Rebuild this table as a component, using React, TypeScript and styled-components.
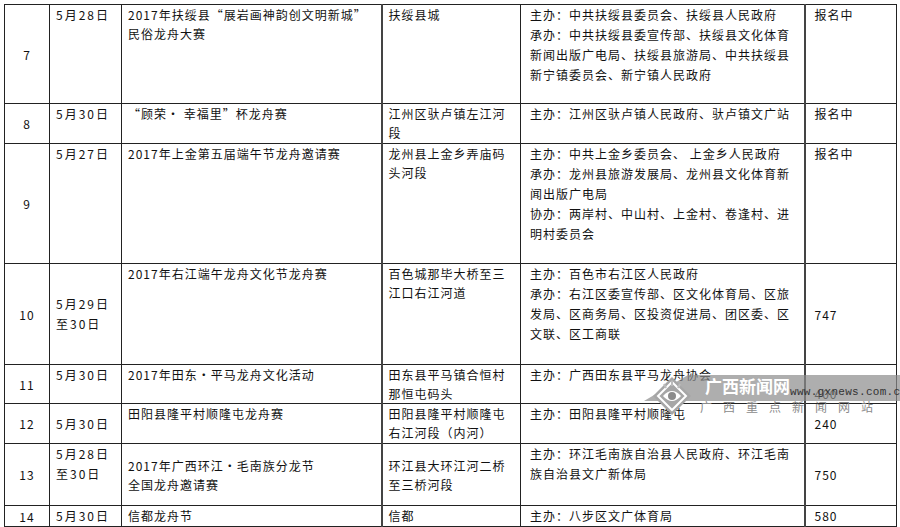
import React from "react";
import styled, { createGlobalStyle } from "styled-components";

const GlobalStyle = createGlobalStyle`
	html,
	body {
		margin: 0;
		padding: 0;
		background: #fff;
	}

	body {
		font-family: "Noto Sans CJK SC", "Liberation Sans", sans-serif;
		color: #111;
	}
`;

type VAlign = "top" | "middle" | "bottom";

interface RaceRow {
	no: string;
	date: string[];
	dateV?: VAlign;
	title: string[];
	titleV?: VAlign;
	place: string[];
	placeV?: VAlign;
	org: string[];
	status: string;
	statusV?: VAlign;
	height: number;
}

const rows: RaceRow[] = [
	{
		no: "7",
		date: ["5月28日"],
		title: ["2017年扶绥县“展岩画神韵创文明新城”", "民俗龙舟大赛"],
		place: ["扶绥县城"],
		org: [
			"主办：中共扶绥县委员会、扶绥县人民政府",
			"承办：中共扶绥县委宣传部、扶绥县文化体育",
			"新闻出版广电局、扶绥县旅游局、中共扶绥县",
			"新宁镇委员会、新宁镇人民政府",
		],
		status: "报名中",
		height: 99,
	},
	{
		no: "8",
		date: ["5月30日"],
		title: ["“顾荣· 幸福里”杯龙舟赛"],
		place: ["江州区驮卢镇左江河", "段"],
		org: ["主办：江州区驮卢镇人民政府、驮卢镇文广站"],
		status: "报名中",
		height: 40,
	},
	{
		no: "9",
		date: ["5月27日"],
		title: ["2017年上金第五届端午节龙舟邀请赛"],
		place: ["龙州县上金乡弄庙码", "头河段"],
		org: [
			"主办：中共上金乡委员会、 上金乡人民政府",
			"承办：龙州县旅游发展局、龙州县文化体育新",
			"闻出版广电局",
			"协办：两岸村、中山村、上金村、卷逢村、进",
			"明村委员会",
		],
		status: "报名中",
		height: 120,
	},
	{
		no: "10",
		date: ["5月29日", "至30日"],
		dateV: "middle",
		title: ["2017年右江端午龙舟文化节龙舟赛"],
		place: ["百色城那毕大桥至三", "江口右江河道"],
		org: [
			"主办：百色市右江区人民政府",
			"承办：右江区委宣传部、区文化体育局、区旅",
			"发局、区商务局、区投资促进局、团区委、区",
			"文联、区工商联",
		],
		status: "747",
		statusV: "middle",
		height: 101,
	},
	{
		no: "11",
		date: ["5月30日"],
		title: ["2017年田东·平马龙舟文化活动"],
		place: ["田东县平马镇合恒村", "那恒屯码头"],
		org: ["主办：广西田东县平马龙舟协会"],
		status: "400",
		statusV: "bottom",
		height: 39,
	},
	{
		no: "12",
		date: ["5月30日"],
		dateV: "middle",
		title: ["田阳县隆平村顺隆屯龙舟赛"],
		place: ["田阳县隆平村顺隆屯", "右江河段（内河）"],
		org: ["主办：田阳县隆平村顺隆屯"],
		status: "240",
		statusV: "middle",
		height: 40,
	},
	{
		no: "13",
		date: ["5月28日", "至30日"],
		title: ["2017年广西环江·毛南族分龙节", "全国龙舟邀请赛"],
		titleV: "middle",
		place: ["环江县大环江河二桥", "至三桥河段"],
		placeV: "middle",
		org: ["主办：环江毛南族自治县人民政府、环江毛南", "族自治县文广新体局"],
		status: "750",
		statusV: "middle",
		height: 62,
	},
	{
		no: "14",
		date: ["5月30日"],
		title: ["信都龙舟节"],
		place: ["信都"],
		org: ["主办：八步区文广体育局"],
		status: "580",
		height: 18,
	},
];

const Page = styled.div`
	position: relative;
	padding: 4px 0 0 4px;
	width: 900px;
	height: 527px;
	box-sizing: border-box;
	overflow: hidden;
`;

const Table = styled.table`
	border-collapse: collapse;
	table-layout: fixed;
	width: 892px;
	font-size: 12px;
	letter-spacing: 1px;
	line-height: 19px;
`;

const Row = styled.tr<{ $h: number }>`
	height: ${(p) => p.$h}px;
`;

const Cell = styled.td<{ $v?: VAlign; $pad?: number; $center?: boolean; $thick?: boolean }>`
	border: 1px solid #222;
	border-right-width: ${(p) => (p.$thick ? 2 : 1)}px;
	border-right-color: ${(p) => (p.$thick ? "#444" : "#222")};
	vertical-align: ${(p) => p.$v ?? "top"};
	padding: 0 2px 0 ${(p) => p.$pad ?? 6}px;
	text-align: ${(p) => (p.$center ? "center" : "left")};
	white-space: nowrap;
	overflow: hidden;
`;

const OrgLine = styled.div`
	line-height: 20px;
`;

const DateText = styled.div`
	letter-spacing: 2px;
	line-height: 20px;
`;

const Watermark = styled.div`
	position: absolute;
	left: 636px;
	top: 370px;
	width: 264px;
	height: 46px;
	pointer-events: none;
`;

const Band = styled.div`
	position: absolute;
	left: 8px;
	top: 5px;
	right: 0;
	height: 26px;
	background: rgba(140, 140, 140, 0.7);
	clip-path: polygon(44px 0, 100% 0, 100% 100%, 0 100%);
`;

const Logo = styled.svg`
	position: absolute;
	left: 16px;
	top: 3px;
`;

const Brand = styled.div`
	position: absolute;
	left: 69px;
	top: 6px;
	font-family: "Noto Sans CJK SC", sans-serif;
	font-weight: 700;
	font-size: 17px;
	line-height: 20px;
	color: #fff;
	letter-spacing: 0;
`;

const Url = styled.div`
	position: absolute;
	left: 154px;
	top: 16px;
	font-family: "Liberation Mono", monospace;
	font-size: 11px;
	line-height: 12px;
	color: #333;
	letter-spacing: 0.3px;
	white-space: nowrap;
`;

const Slogan = styled.div`
	position: absolute;
	left: 64px;
	top: 30px;
	font-size: 12px;
	line-height: 14px;
	color: #8a8a8a;
	letter-spacing: 11px;
	white-space: nowrap;
`;

export default function App() {
	return (
		<Page>
			<GlobalStyle />
			<Table>
				<colgroup>
					<col style={{ width: 45 }} />
					<col style={{ width: 72 }} />
					<col style={{ width: 260 }} />
					<col style={{ width: 139 }} />
					<col style={{ width: 284 }} />
					<col style={{ width: 92 }} />
				</colgroup>
				<tbody>
					{rows.map((r) => (
						<Row key={r.no} $h={r.height}>
							<Cell $v="middle" $center $pad={2}>
								{r.no}
							</Cell>
							<Cell $v={r.dateV}>
								{r.date.map((d, i) => (
									<DateText key={i}>{d}</DateText>
								))}
							</Cell>
							<Cell $v={r.titleV} $thick>
								{r.title.map((t, i) => (
									<div key={i}>{t}</div>
								))}
							</Cell>
							<Cell $v={r.placeV}>
								{r.place.map((t, i) => (
									<div key={i}>{t}</div>
								))}
							</Cell>
							<Cell $v="top" $pad={9} $thick>
								{r.org.map((t, i) => (
									<OrgLine key={i}>{t}</OrgLine>
								))}
							</Cell>
							<Cell $v={r.statusV} $pad={9}>
								{r.status}
							</Cell>
						</Row>
					))}
				</tbody>
			</Table>
			<Watermark>
				<Band />
				<Logo width="40" height="42" viewBox="0 0 40 42">
					<polygon points="20,4 39,23 20,42 1,23" fill="#a6a6a6" />
					<polygon points="20,9 34,23 20,37 6,23" fill="none" stroke="#fff" strokeWidth="2" />
					<path d="M11 23 Q20 13 29 23 Q20 33 11 23 Z" fill="#fff" />
					<circle cx="20" cy="23" r="4" fill="#8c8c8c" />
					<path d="M14 15 L12 11 M20 13 L20 8 M26 15 L28 11" stroke="#bcbcbc" strokeWidth="2" />
				</Logo>
				<Brand>广西新闻网</Brand>
				<Url>www.gxnews.com.cn</Url>
				<Slogan>广西重点新闻网站</Slogan>
			</Watermark>
		</Page>
	);
}
